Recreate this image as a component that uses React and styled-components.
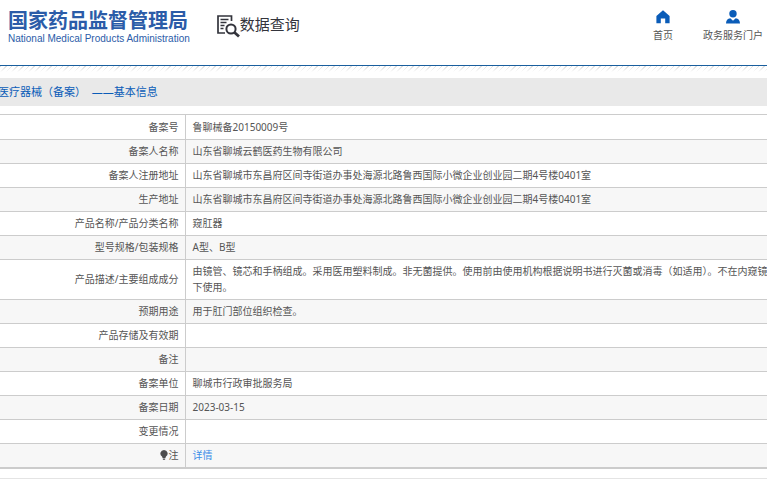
import React from "react";
import styled, { createGlobalStyle } from "styled-components";

const rows = [
  { label: "备案号", value: "鲁聊械备20150009号" },
  { label: "备案人名称", value: "山东省聊城云鹤医药生物有限公司" },
  {
    label: "备案人注册地址",
    value:
      "山东省聊城市东昌府区间寺街道办事处海源北路鲁西国际小微企业创业园二期4号楼0401室",
  },
  {
    label: "生产地址",
    value:
      "山东省聊城市东昌府区间寺街道办事处海源北路鲁西国际小微企业创业园二期4号楼0401室",
  },
  { label: "产品名称/产品分类名称", value: "窥肛器" },
  { label: "型号规格/包装规格", value: "A型、B型" },
  {
    label: "产品描述/主要组成成分",
    value:
      "由镜管、镜芯和手柄组成。采用医用塑料制成。非无菌提供。使用前由使用机构根据说明书进行灭菌或消毒（如适用）。不在内窥镜下使用。",
  },
  { label: "预期用途", value: "用于肛门部位组织检查。" },
  { label: "产品存储及有效期", value: "" },
  { label: "备注", value: "" },
  { label: "备案单位", value: "聊城市行政审批服务局" },
  { label: "备案日期", value: "2023-03-15" },
  { label: "变更情况", value: "" },
];

const App = () => {
  return (
    <>
      <GlobalStyle />
      <Header>
        <Logo href="#">
          <LogoName>国家药品监督管理局</LogoName>
          <LogoEnglish>National Medical Products Administration</LogoEnglish>
        </Logo>
        <Section>
          <SearchIcon />
          数据查询
        </Section>
        <Nav>
          <NavLink href="#">
            <HomeIcon />
            首页
          </NavLink>
          <NavLink href="#">
            <UserIcon />
            政务服务门户
          </NavLink>
        </Nav>
      </Header>
      <Hatch />
      <main>
        <Title>医疗器械（备案）&nbsp; ——基本信息</Title>
        <Table>
          <tbody>
            {rows.map((row) => (
              <Row key={row.label}>
                <Label scope="row">{row.label}</Label>
                <Value>{row.value}</Value>
              </Row>
            ))}
            <Row>
              <Label scope="row">
                <BulbIcon />注
              </Label>
              <Value>
                <DetailLink href="#">详情</DetailLink>
              </Value>
            </Row>
          </tbody>
        </Table>
      </main>
      <Footer />
    </>
  );
};

const SearchIcon = () => (
  <svg width="23" height="23" viewBox="0 0 23 23" fill="none" stroke="#33343c">
    <path d="M14.5 6V1H1v17h7" strokeWidth="1.7" />
    <path d="M3.5 4.5h8M3.5 7.5h6M3.5 10.5h4M3.5 13.5h3" strokeWidth="1.4" />
    <circle cx="14" cy="14" r="4.6" strokeWidth="2" />
    <path d="M17.5 17.5l4.5 4" strokeWidth="2.8" />
  </svg>
);

const HomeIcon = () => (
  <svg width="14" height="14" viewBox="0 0 14 14" fill="#0a5cb8">
    <path d="M7 0.3L0.4 6v7.2h4.4V8.6h4.4v4.6h4.4V6z" />
  </svg>
);

const UserIcon = () => (
  <svg width="14" height="14" viewBox="0 0 14 14" fill="#0a5cb8">
    <circle cx="7" cy="3.8" r="3.7" />
    <path d="M0 13.6c0-3.4 1.6-5 4.3-5.4L7 10.8l2.7-2.6c2.7.4 4.3 2 4.3 5.4z" />
  </svg>
);

const BulbIcon = () => (
  <svg width="8" height="10" viewBox="0 0 8 10" fill="#4c4c4c">
    <path d="M4 0a3.6 3.6 0 0 0-2 6.6L2.6 8h2.8L6 6.6A3.6 3.6 0 0 0 4 0z" />
    <path d="M2.8 8.4h2.4v1L4 10l-1.2-.6z" />
  </svg>
);

const GlobalStyle = createGlobalStyle`
  * {
    box-sizing: border-box;
  }
  body {
    margin: 0;
    overflow-x: hidden;
    background: #fff;
    color: #555;
    font-family: "Noto Sans", "Noto Sans CJK SC", sans-serif;
    font-size: 10px;
    line-height: 16px;
  }
  a {
    color: inherit;
    text-decoration: none;
  }
`;

const Header = styled.header`
  display: flex;
  align-items: flex-start;
  height: 66px;
  padding: 8px 4px 0 8px;
  border-bottom: 1px solid #1a5f9e;
`;

const Logo = styled.a`
  display: flex;
  flex-direction: column;
  color: #2b5ca8;
  white-space: nowrap;
`;

const LogoName = styled.span`
  font-family: "Noto Sans CJK SC", sans-serif;
  font-size: 20px;
  font-weight: 700;
  line-height: 24px;
`;

const LogoEnglish = styled.span`
  font-family: "Liberation Sans", sans-serif;
  font-size: 10px;
  line-height: 14px;
`;

const Section = styled.div`
  display: flex;
  align-items: flex-start;
  margin: 4px 0 0 27px;
  color: #33343c;
  font-family: "Noto Sans CJK SC", sans-serif;
  font-size: 15px;
  line-height: 24px;
  white-space: nowrap;

  svg {
    margin-top: 3px;
  }
`;

const Nav = styled.nav`
  display: flex;
  gap: 30px;
  margin-left: auto;
`;

const NavLink = styled.a`
  display: flex;
  flex-direction: column;
  align-items: center;
  gap: 3px;
  padding-top: 2px;
  white-space: nowrap;
`;

const Hatch = styled.div`
  height: 12px;
  background: linear-gradient(transparent, #fff 6px),
    repeating-linear-gradient(135deg, #dcdcdc 0 1px, #fff 1px 4px);
`;

const Title = styled.h1`
  margin: 0 0 8px;
  background: #e9e9e9;
  color: #0a5cb8;
  font-size: 11px;
  font-weight: 400;
  line-height: 28px;
  text-indent: -2px;
  white-space: nowrap;
`;

const Table = styled.table`
  width: calc(100% + 8px);
  border-collapse: collapse;
  border-top: 1px solid #ccc;
  border-bottom: 2px solid #ccc;
`;

const Label = styled.th`
  width: 185px;
  padding: 3px 6px 4px;
  border-right: 1px solid #ccc;
  font-weight: 400;
  text-align: right;

  svg {
    margin-right: 1px;
    vertical-align: -1px;
  }
`;

const Value = styled.td`
  padding: 3px 0 4px 7px;
`;

const Row = styled.tr`
  border-bottom: 1px solid #ccc;

  &:nth-child(even) {
    background: #f7f7f7;
  }

  &:first-child > * {
    padding-top: 4px;
  }
`;

const DetailLink = styled.a`
  color: #3c8ee8;
`;

const Footer = styled.footer`
  margin-top: 9px;
  border-top: 1px solid #e4e4e4;
`;

export default App;
